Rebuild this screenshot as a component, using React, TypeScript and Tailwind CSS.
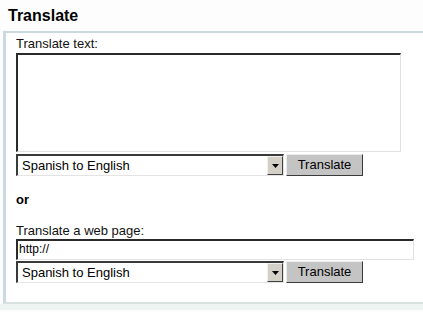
const font = { fontFamily: '"Liberation Sans", Arial, sans-serif' };

function LangSelect() {
  return (
    <div className="flex h-[22px] w-[268px] border-t-2 border-l-2 border-t-[#3a3a3a] border-l-[#3a3a3a] border-b border-r border-b-[#e4e4e4] border-r-[#e4e4e4] bg-white">
      <span className="flex-1 pl-[4px] text-[13px] leading-[19px] text-black">Spanish to English</span>
      <span className="flex h-full w-[16px] items-center justify-center border-t border-l border-t-[#f0f0f0] border-l-[#f0f0f0] border-b border-r border-b-[#404040] border-r-[#404040] bg-[#d4d0c8]">
        <svg width="7" height="4" viewBox="0 0 7 4">
          <path d="M0 0h7L3.5 4z" fill="#000" />
        </svg>
      </span>
    </div>
  );
}

function Btn() {
  return (
    <button
      type="button"
      className="ml-[2px] h-[22px] w-[77px] border border-t-[#ececec] border-l-[#ececec] border-b-[#3a3a3a] border-r-[#3a3a3a] bg-[#c4c4c4] text-[13px] leading-[18px] text-black"
      style={font}
    >
      Translate
    </button>
  );
}

export default function App() {
  return (
    <div className="h-[312px] w-[423px] overflow-hidden bg-[#fdfdfd] text-black" style={font}>
      <h2 className="pl-[8px] pt-[6px] text-[16px] font-bold leading-[19px]">Translate</h2>
      <div className="mt-[6px] ml-[3px] w-[440px] border-t-2 border-l-[3px] border-b-2 border-t-[#c9d9df] border-l-[#cdd9e1] border-b-[#d7e2e0] bg-white pb-[19px] pl-[10px] pt-[3px]">
        <div className="text-[13px] leading-[15px] text-[#111]">Translate text:</div>
        <div className="mt-[2px] h-[99px] w-[385px] border-t-2 border-l-2 border-t-[#2a2a2a] border-l-[#2a2a2a] border-b border-r border-b-[#e2e2e2] border-r-[#e2e2e2] bg-white" />
        <div className="mt-[2px] flex">
          <LangSelect />
          <Btn />
        </div>
        <div className="mt-[17px] text-[13px] font-bold leading-[14px]">or</div>
        <div className="mt-[16px] text-[13px] leading-[15px] text-[#111]">Translate a web page:</div>
        <div className="mt-[1px] h-[21px] w-[398px] border-t-2 border-l-2 border-t-[#2a2a2a] border-l-[#2a2a2a] border-b border-r border-b-[#e2e2e2] border-r-[#e2e2e2] bg-white pl-[1px] text-[12px] leading-[17px]">
          http://
        </div>
        <div className="mt-[1px] flex">
          <LangSelect />
          <Btn />
        </div>
      </div>
      <div className="h-[6px] bg-[#eef4f1]" />
    </div>
  );
}
